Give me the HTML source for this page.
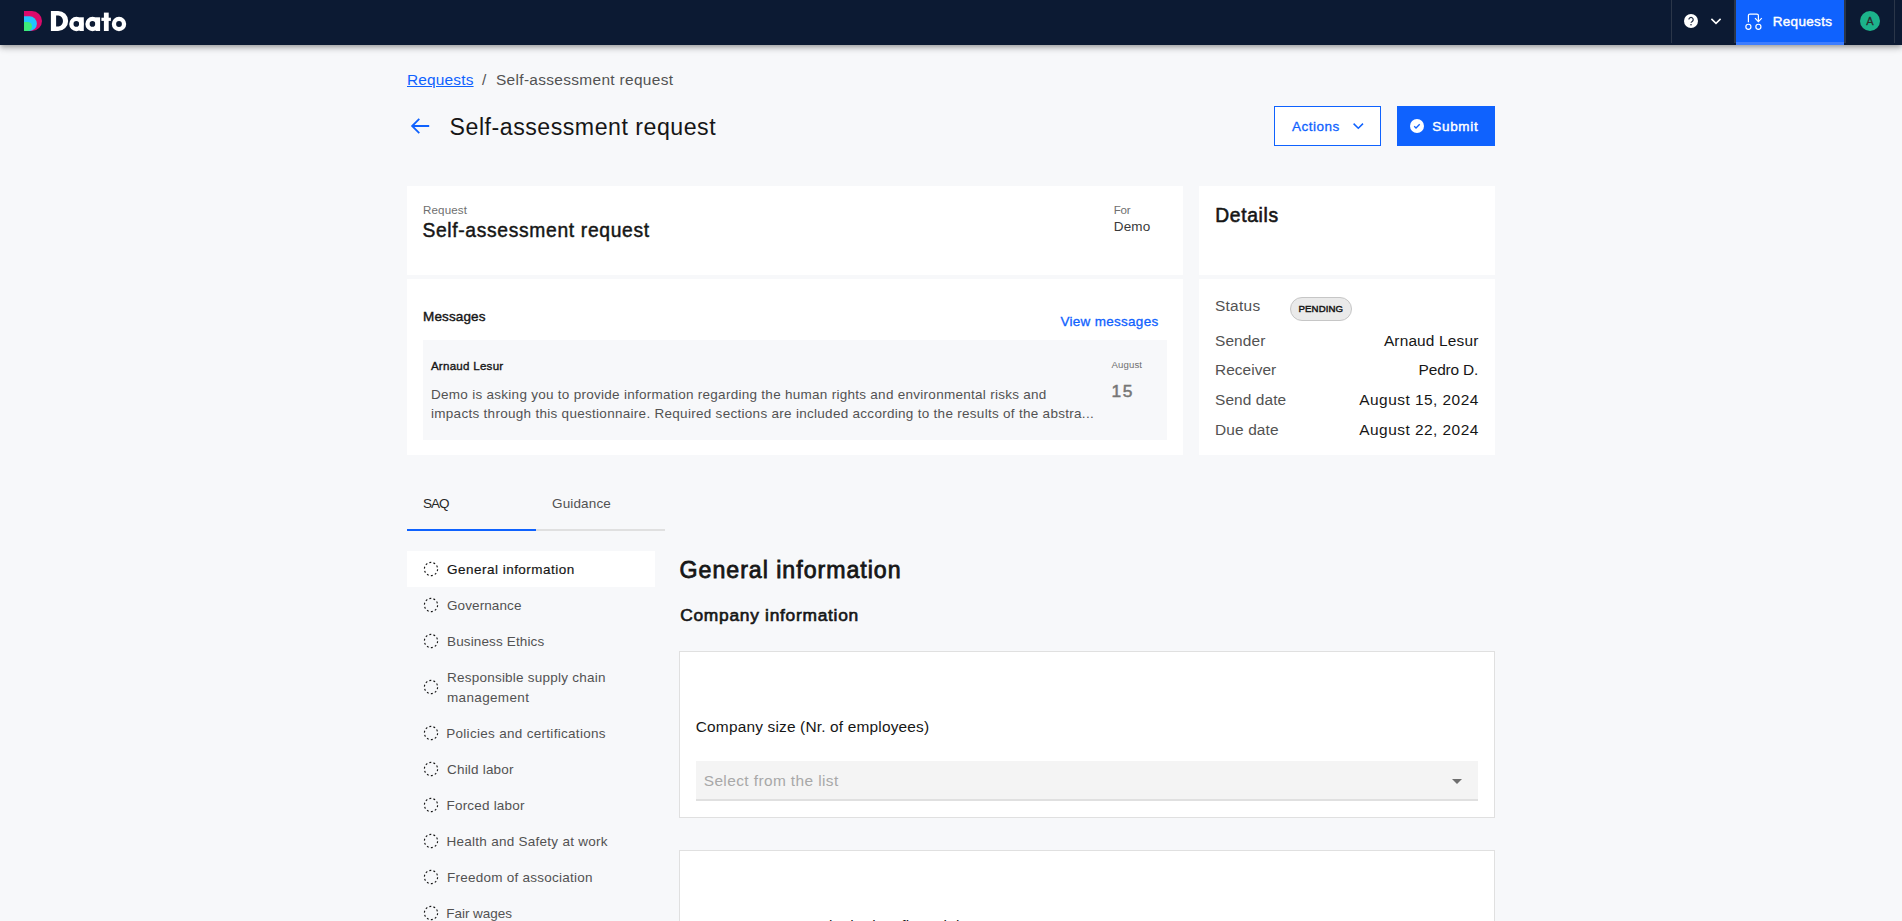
<!DOCTYPE html>
<html lang="en">
<head>
<meta charset="utf-8">
<title>Self-assessment request</title>
<style>
*{box-sizing:border-box;margin:0;padding:0}
html,body{width:1902px;height:921px;overflow:hidden}
body{background:#f7f8fa;font-family:"Liberation Sans",sans-serif;position:relative;color:#161616}
.abs{position:absolute}
.t{position:absolute;white-space:nowrap}
#hdr{position:absolute;left:0;top:0;width:1902px;height:45px;background:#0c1a33;box-shadow:0 2px 4px -1px rgba(0,0,0,.2),0 4px 5px 0 rgba(0,0,0,.14),0 1px 10px 0 rgba(0,0,0,.12)}
.vd{position:absolute;top:0;width:1px;height:43px;background:#2b3649}
#reqbtn{position:absolute;left:1736px;top:0;width:108px;height:45px;background:#0f62fe;border-bottom:3px solid #3d7dff}
#bc1{text-decoration:underline;text-decoration-thickness:1px;text-underline-offset:.5px}
.card{position:absolute;background:#fff}
.qcard{position:absolute;background:#fff;border:1px solid #e0e0e0}
</style>
</head>
<body>
<!--HEADER-->
<header id="hdr">
<svg class="abs" style="left:0;top:0" width="140" height="45" viewBox="0 0 140 45">
<path d="M24 11h8a10 10 0 0 1 0 20h-8z" fill="#db0a6b"/>
<path d="M24 16.3h5.55a7.35 7.35 0 0 1 0 14.7H24z" fill="#22c5ff"/>
<path d="M24 22h3.5a4.5 4.5 0 0 1 0 9H24z" fill="#3dec79"/>
<g fill="#fff" fill-rule="evenodd">
<path d="M50.9 10.9h7.2a10 10 0 0 1 0 20.1h-7.2zM56.1 15.6v10.8h2.3a4.6 5.4 0 0 0 0-10.8z"/>
<path d="M76.4 16.8a7.2 7.2 0 1 0 0 14.4 7.2 7.2 0 0 0 0-14.4zM76.3 21.1a2.8 2.8 0 1 1 0 5.6 2.8 2.8 0 0 1 0-5.6z"/>
<rect x="79.4" y="17.3" width="4.4" height="13.7"/>
<path d="M92.55 16.8a7.2 7.2 0 1 0 0 14.4 7.2 7.2 0 0 0 0-14.4zM92.45 21.1a2.8 2.8 0 1 1 0 5.6 2.8 2.8 0 0 1 0-5.6z"/>
<rect x="95.6" y="17.3" width="4.5" height="13.7"/>
<rect x="103.9" y="12.6" width="4.8" height="18.4"/>
<rect x="101.4" y="17.7" width="9.5" height="3.2"/>
<path d="M119 16.8a7.2 7.2 0 1 0 0 14.4 7.2 7.2 0 0 0 0-14.4zM119 21.1a2.9 2.9 0 1 1 0 5.8 2.9 2.9 0 0 1 0-5.8z"/>
</g>
</svg>
<div class="vd" style="left:1671px"></div>
<div class="vd" style="left:1734px;width:2px"></div>
<div class="vd" style="left:1844px;width:2px"></div>
<div class="vd" style="left:1894px"></div>
<svg class="abs" style="left:1680px;top:10px" width="48" height="24" viewBox="1680 10 48 24">
<circle cx="1691" cy="21" r="7" fill="#fff"/>
<path d="M1688.9 19.6a2.15 2.15 0 1 1 3.3 1.8c-.8.5-1.15.8-1.15 1.4" fill="none" stroke="#1f2a40" stroke-width="1.2"/>
<circle cx="1691" cy="24.7" r=".8" fill="#1f2a40"/>
<path d="M1711.4 18.9l4.6 4.5 4.6-4.5" fill="none" stroke="#fff" stroke-width="1.5"/>
</svg>
<div id="reqbtn"></div>
<svg class="abs" style="left:1742px;top:10px" width="24" height="24" viewBox="1742 10 24 24" fill="none" stroke="#fff" stroke-width="1.2">
<circle cx="1748.4" cy="26.8" r="2.55"/>
<circle cx="1758.4" cy="26.8" r="2.55"/>
<path d="M1748.4 22.2V15.6a1.5 1.5 0 0 1 1.5-1.5h7a1.5 1.5 0 0 1 1.5 1.5v5.8"/>
<path d="M1755 18.2l3.4 3.4 3.4-3.4"/>
</svg>
<svg class="abs" style="left:1858px;top:9px" width="24" height="24" viewBox="1858 9 24 24">
<circle cx="1870" cy="21" r="10" fill="#1cb38b"/>
</svg>
<div class="t" style="left:1860px;top:11px;width:20px;line-height:20px;text-align:center;font-size:11px;color:#2b2b2b;-webkit-text-stroke:.3px #2b2b2b">A</div>
</header>
<!--TOP-->
<svg class="abs" style="left:405px;top:114px" width="30" height="24" viewBox="405 114 30 24" fill="none" stroke="#0f62fe" stroke-width="1.8">
<path d="M429.2 126H412.3M419.3 118.8l-7.2 7.2 7.2 7.2"/>
</svg>
<div class="abs" style="left:1274px;top:106px;width:107px;height:40px;background:#fff;border:1px solid #0f62fe"></div>
<svg class="abs" style="left:1348px;top:118px" width="20" height="16" viewBox="1348 118 20 16" fill="none" stroke="#0f62fe" stroke-width="1.5">
<path d="M1353.6 123.6l4.7 4.6 4.7-4.6"/>
</svg>
<div class="abs" style="left:1397px;top:106px;width:98px;height:40px;background:#0f62fe"></div>
<svg class="abs" style="left:1408px;top:117px" width="18" height="18" viewBox="1408 117 18 18">
<circle cx="1417" cy="126" r="7" fill="#fff"/>
<path d="M1414.2 126.3l1.8 1.7 3.7-3.8" fill="none" stroke="#0f62fe" stroke-width="1.3"/>
</svg>
<!--CARDS-->
<div class="card" style="left:407px;top:186px;width:776px;height:89px"></div>
<div class="card" style="left:1199px;top:186px;width:296px;height:89px"></div>
<div class="card" style="left:407px;top:279px;width:776px;height:176px"></div>
<div class="card" style="left:1199px;top:279px;width:296px;height:176px"></div>
<div class="abs" style="left:423px;top:340px;width:744px;height:100px;background:#f7f8fa"></div>
<div class="abs" style="left:1290px;top:297px;width:62px;height:24px;border-radius:12px;background:#eaeaea;border:1px solid #c6c6c6"></div>
<!--TABS-->
<div class="abs" style="left:407px;top:529px;width:129px;height:2px;background:#0f62fe"></div>
<div class="abs" style="left:536px;top:529px;width:129px;height:2px;background:#e0e0e0"></div>
<div class="abs" style="left:407px;top:551px;width:248px;height:36px;background:#fff"></div>
<svg class="abs" style="left:423px;top:561px" width="16" height="16" viewBox="0 0 16 16"><circle cx="8" cy="8" r="6.6" fill="none" stroke="#161616" stroke-width="1.15" stroke-dasharray="1.9 2.247" transform="rotate(2 8 8)"/></svg>
<svg class="abs" style="left:423px;top:597px" width="16" height="16" viewBox="0 0 16 16"><circle cx="8" cy="8" r="6.6" fill="none" stroke="#161616" stroke-width="1.15" stroke-dasharray="1.9 2.247" transform="rotate(2 8 8)"/></svg>
<svg class="abs" style="left:423px;top:633px" width="16" height="16" viewBox="0 0 16 16"><circle cx="8" cy="8" r="6.6" fill="none" stroke="#161616" stroke-width="1.15" stroke-dasharray="1.9 2.247" transform="rotate(2 8 8)"/></svg>
<svg class="abs" style="left:423px;top:679px" width="16" height="16" viewBox="0 0 16 16"><circle cx="8" cy="8" r="6.6" fill="none" stroke="#161616" stroke-width="1.15" stroke-dasharray="1.9 2.247" transform="rotate(2 8 8)"/></svg>
<svg class="abs" style="left:423px;top:725px" width="16" height="16" viewBox="0 0 16 16"><circle cx="8" cy="8" r="6.6" fill="none" stroke="#161616" stroke-width="1.15" stroke-dasharray="1.9 2.247" transform="rotate(2 8 8)"/></svg>
<svg class="abs" style="left:423px;top:761px" width="16" height="16" viewBox="0 0 16 16"><circle cx="8" cy="8" r="6.6" fill="none" stroke="#161616" stroke-width="1.15" stroke-dasharray="1.9 2.247" transform="rotate(2 8 8)"/></svg>
<svg class="abs" style="left:423px;top:797px" width="16" height="16" viewBox="0 0 16 16"><circle cx="8" cy="8" r="6.6" fill="none" stroke="#161616" stroke-width="1.15" stroke-dasharray="1.9 2.247" transform="rotate(2 8 8)"/></svg>
<svg class="abs" style="left:423px;top:833px" width="16" height="16" viewBox="0 0 16 16"><circle cx="8" cy="8" r="6.6" fill="none" stroke="#161616" stroke-width="1.15" stroke-dasharray="1.9 2.247" transform="rotate(2 8 8)"/></svg>
<svg class="abs" style="left:423px;top:869px" width="16" height="16" viewBox="0 0 16 16"><circle cx="8" cy="8" r="6.6" fill="none" stroke="#161616" stroke-width="1.15" stroke-dasharray="1.9 2.247" transform="rotate(2 8 8)"/></svg>
<svg class="abs" style="left:423px;top:905px" width="16" height="16" viewBox="0 0 16 16"><circle cx="8" cy="8" r="6.6" fill="none" stroke="#161616" stroke-width="1.15" stroke-dasharray="1.9 2.247" transform="rotate(2 8 8)"/></svg>
<!--MAIN-->
<div class="qcard" style="left:679px;top:651px;width:816px;height:167px"></div>
<div class="abs" style="left:696px;top:761px;width:782px;height:40px;background:#f4f4f4;border-bottom:2px solid #e0e0e0"></div>
<svg class="abs" style="left:1450px;top:776px" width="14" height="10" viewBox="1450 776 14 10"><path d="M1452 779h10l-5 5z" fill="#6f6f6f"/></svg>
<div class="qcard" style="left:679px;top:850px;width:816px;height:100px"></div>
<div class="t" id="hreq" style="left:1772.70px;top:13px;font-size:13.51px;line-height:18px;height:18px;color:#ffffff;letter-spacing:0.322px;-webkit-text-stroke:0.41px #ffffff">Requests</div>
<div class="t" id="bc1" style="left:407.00px;top:70px;font-size:15.44px;line-height:20px;height:20px;color:#0f62fe;letter-spacing:0.169px">Requests</div>
<div class="t" id="bcs" style="left:482.00px;top:70px;font-size:15.44px;line-height:20px;height:20px;color:#525252">/</div>
<div class="t" id="bc2" style="left:496.00px;top:70px;font-size:15.44px;line-height:20px;height:20px;color:#525252;letter-spacing:0.323px">Self-assessment request</div>
<div class="t" id="title" style="left:449.60px;top:112px;font-size:23.16px;line-height:30px;height:30px;color:#161616;letter-spacing:0.507px">Self-assessment request</div>
<div class="t" id="actions" style="left:1292.00px;top:118px;font-size:13.51px;line-height:18px;height:18px;color:#0f62fe;letter-spacing:0.503px;-webkit-text-stroke:0.3px #0f62fe">Actions</div>
<div class="t" id="submit" style="left:1432.30px;top:118px;font-size:13.51px;line-height:18px;height:18px;color:#ffffff;letter-spacing:0.674px;-webkit-text-stroke:0.41px #ffffff">Submit</div>
<div class="t" id="lreq" style="left:423.00px;top:203px;font-size:11.58px;line-height:15px;height:15px;color:#6f6f6f;letter-spacing:0.146px">Request</div>
<div class="t" id="ctitle" style="left:422.40px;top:218px;font-size:19.3px;line-height:25px;height:25px;color:#161616;letter-spacing:0.663px;-webkit-text-stroke:0.45px #161616">Self-assessment request</div>
<div class="t" id="lfor" style="left:1113.70px;top:203px;font-size:11.58px;line-height:15px;height:15px;color:#6f6f6f;letter-spacing:-0.287px">For</div>
<div class="t" id="demo" style="left:1113.70px;top:218px;font-size:13.51px;line-height:18px;height:18px;color:#393939;letter-spacing:0.195px">Demo</div>
<div class="t" id="details" style="left:1215.20px;top:203px;font-size:19.3px;line-height:25px;height:25px;color:#161616;letter-spacing:0.677px;-webkit-text-stroke:0.57px #161616">Details</div>
<div class="t" id="messages" style="left:423.00px;top:308px;font-size:13.51px;line-height:18px;height:18px;color:#161616;letter-spacing:0.138px;-webkit-text-stroke:0.41px #161616">Messages</div>
<div class="t" id="viewmsg" style="left:1060.50px;top:313px;font-size:13.51px;line-height:18px;height:18px;color:#0f62fe;letter-spacing:0.284px;-webkit-text-stroke:0.3px #0f62fe">View messages</div>
<div class="t" id="msgname" style="left:430.90px;top:359px;font-size:11.58px;line-height:15px;height:15px;color:#161616;letter-spacing:0.253px;-webkit-text-stroke:0.36px #161616">Arnaud Lesur</div>
<div class="t" id="msg1" style="left:431.00px;top:386px;font-size:13.51px;line-height:18px;height:18px;color:#525252;letter-spacing:0.277px">Demo is asking you to provide information regarding the human rights and environmental risks and</div>
<div class="t" id="msg2" style="left:431.00px;top:405px;font-size:13.51px;line-height:18px;height:18px;color:#525252;letter-spacing:0.288px">impacts through this questionnaire. Required sections are included according to the results of the abstra...</div>
<div class="t" id="aug" style="left:1111.50px;top:358px;font-size:9.65px;line-height:13px;height:13px;color:#6f6f6f;letter-spacing:0.106px">August</div>
<div class="t" id="d15" style="left:1111.50px;top:380px;font-size:17.37px;line-height:23px;height:23px;color:#767676;letter-spacing:1.688px;-webkit-text-stroke:0.52px #767676">15</div>
<div class="t" id="status" style="left:1215.00px;top:296px;font-size:15.44px;line-height:20px;height:20px;color:#525252;letter-spacing:0.267px">Status</div>
<div class="t" id="pending" style="left:1298.60px;top:302px;font-size:9.65px;line-height:13px;height:13px;color:#161616;letter-spacing:0.090px;-webkit-text-stroke:0.45px #161616">PENDING</div>
<div class="t" id="sender" style="left:1215.00px;top:331px;font-size:15.44px;line-height:20px;height:20px;color:#525252;letter-spacing:0.104px">Sender</div>
<div class="t" id="vsender" style="left:1383.90px;top:331px;font-size:15.44px;line-height:20px;height:20px;color:#161616;letter-spacing:0.156px">Arnaud Lesur</div>
<div class="t" id="receiver" style="left:1215.00px;top:360px;font-size:15.44px;line-height:20px;height:20px;color:#525252;letter-spacing:0.040px">Receiver</div>
<div class="t" id="vreceiver" style="left:1418.60px;top:360px;font-size:15.44px;line-height:20px;height:20px;color:#161616;letter-spacing:-0.175px">Pedro D.</div>
<div class="t" id="senddate" style="left:1215.00px;top:390px;font-size:15.44px;line-height:20px;height:20px;color:#525252;letter-spacing:0.101px">Send date</div>
<div class="t" id="vsend" style="left:1359.30px;top:390px;font-size:15.44px;line-height:20px;height:20px;color:#161616;letter-spacing:0.468px">August 15, 2024</div>
<div class="t" id="duedate" style="left:1215.00px;top:420px;font-size:15.44px;line-height:20px;height:20px;color:#525252;letter-spacing:0.135px">Due date</div>
<div class="t" id="vdue" style="left:1359.30px;top:420px;font-size:15.44px;line-height:20px;height:20px;color:#161616;letter-spacing:0.468px">August 22, 2024</div>
<div class="t" id="saq" style="left:422.90px;top:495px;font-size:13.51px;line-height:18px;height:18px;color:#262626;letter-spacing:-0.958px">SAQ</div>
<div class="t" id="guidance" style="left:552.00px;top:495px;font-size:13.51px;line-height:18px;height:18px;color:#525252;letter-spacing:0.143px">Guidance</div>
<div class="t" id="n0" style="left:447.00px;top:561px;font-size:13.51px;line-height:18px;height:18px;color:#161616;letter-spacing:0.485px;-webkit-text-stroke:0.18px #161616">General information</div>
<div class="t" id="n1" style="left:447.00px;top:597px;font-size:13.51px;line-height:18px;height:18px;color:#525252;letter-spacing:0.095px">Governance</div>
<div class="t" id="n2" style="left:447.00px;top:633px;font-size:13.51px;line-height:18px;height:18px;color:#525252;letter-spacing:0.136px">Business Ethics</div>
<div class="t" id="n3a" style="left:447.00px;top:669px;font-size:13.51px;line-height:18px;height:18px;color:#525252;letter-spacing:0.230px">Responsible supply chain</div>
<div class="t" id="n3b" style="left:447.00px;top:689px;font-size:13.51px;line-height:18px;height:18px;color:#525252;letter-spacing:0.343px">management</div>
<div class="t" id="n4" style="left:446.20px;top:725px;font-size:13.51px;line-height:18px;height:18px;color:#525252;letter-spacing:0.301px">Policies and certifications</div>
<div class="t" id="n5" style="left:447.00px;top:761px;font-size:13.51px;line-height:18px;height:18px;color:#525252;letter-spacing:0.195px">Child labor</div>
<div class="t" id="n6" style="left:446.50px;top:797px;font-size:13.51px;line-height:18px;height:18px;color:#525252;letter-spacing:0.200px">Forced labor</div>
<div class="t" id="n7" style="left:446.50px;top:833px;font-size:13.51px;line-height:18px;height:18px;color:#525252;letter-spacing:0.267px">Health and Safety at work</div>
<div class="t" id="n8" style="left:447.00px;top:869px;font-size:13.51px;line-height:18px;height:18px;color:#525252;letter-spacing:0.242px">Freedom of association</div>
<div class="t" id="n9" style="left:446.30px;top:905px;font-size:13.51px;line-height:18px;height:18px;color:#525252;letter-spacing:-0.048px">Fair wages</div>
<div class="t" id="h1" style="left:679.60px;top:555px;font-size:23.16px;line-height:30px;height:30px;color:#161616;letter-spacing:0.979px;-webkit-text-stroke:0.8px #161616">General information</div>
<div class="t" id="h2" style="left:680.20px;top:604px;font-size:17.37px;line-height:23px;height:23px;color:#161616;letter-spacing:0.722px;-webkit-text-stroke:0.64px #161616">Company information</div>
<div class="t" id="q1" style="left:695.80px;top:717px;font-size:15.44px;line-height:20px;height:20px;color:#161616;letter-spacing:0.169px">Company size (Nr. of employees)</div>
<div class="t" id="q2" style="left:695.80px;top:916px;font-size:15.44px;line-height:20px;height:20px;color:#161616;letter-spacing:0.169px">Company revenue in the last financial year</div>
<div class="t" id="sel" style="left:703.70px;top:771px;font-size:15.44px;line-height:20px;height:20px;color:#a8a8a8;letter-spacing:0.401px">Select from the list</div>
</body>
</html>
